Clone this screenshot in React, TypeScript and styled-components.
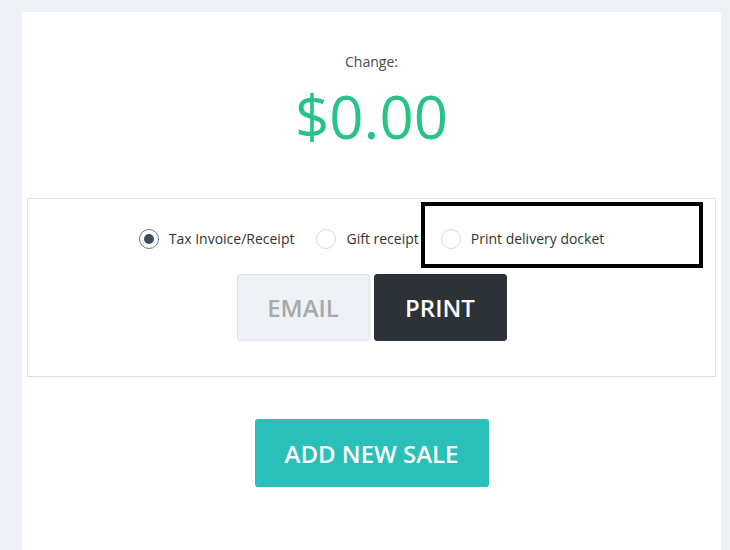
import React, { useState } from 'react';
import styled, { createGlobalStyle } from 'styled-components';

const Global = createGlobalStyle`
  html, body { margin: 0; padding: 0; background: #edf0f5; }
  body { font-family: "Open Sans", "Noto Sans", sans-serif; }
  * { box-sizing: border-box; }
`;

const Page = styled.div`
  height: 550px;
  overflow: hidden;
  padding: 12px 9px 0 22px;
`;

const Card = styled.div`
  background: #fff;
  border-radius: 3px;
  width: 699px;
  min-height: 560px;
  padding: 40px 5px 0 5px;
  display: flex;
  flex-direction: column;
  align-items: center;
`;

const ChangeLabel = styled.div`
  font-size: 14px;
  line-height: 19px;
  color: #4a4a4a;
`;

const Amount = styled.div`
  margin-top: 4px;
  font-size: 60px;
  line-height: 82px;
  color: #27c487;
`;

const OptionsBox = styled.div`
  margin-top: 41px;
  width: 100%;
  border: 1px solid #e3e3e3;
  border-bottom-color: #dcdcdc;
  padding: 30px 0 35px;
  display: flex;
  flex-direction: column;
  align-items: center;
  gap: 25px;
`;

const RadioRow = styled.div`
  display: flex;
  align-items: center;
  gap: 22px;
`;

const Option = styled.label`
  position: relative;
  display: flex;
  align-items: center;
  gap: 10px;
  font-size: 14px;
  line-height: 20px;
  color: #333;
  cursor: pointer;
`;

const Radio = styled.span<{ $checked: boolean }>`
  width: 20px;
  height: 20px;
  border-radius: 50%;
  border: 1px solid ${p => (p.$checked ? '#6b7890' : '#dcdad4')};
  display: flex;
  align-items: center;
  justify-content: center;
  background: #fff;
  &::after {
    content: '';
    width: 10px;
    height: 10px;
    border-radius: 50%;
    background: #3e4a66;
    display: ${p => (p.$checked ? 'block' : 'none')};
  }
`;

const Highlight = styled.span`
  position: absolute;
  left: -20px;
  right: -99px;
  top: -27px;
  bottom: -19px;
  border: 4px solid #000;
  pointer-events: none;
`;

const ButtonGroup = styled.div`
  display: flex;
  gap: 4px;
`;

const ActionButton = styled.button<{ $variant: 'light' | 'dark' }>`
  width: 133px;
  height: 67px;
  border-radius: 3px;
  font-family: "Open Sans", sans-serif;
  font-size: 24px;
  font-weight: 600;
  cursor: pointer;
  border: 1px solid ${p => (p.$variant === 'light' ? '#dfe2e7' : '#2d3138')};
  background: ${p => (p.$variant === 'light' ? '#eef1f6' : '#2d3138')};
  color: ${p => (p.$variant === 'light' ? '#a9a9a9' : '#fff')};
`;

const AddSaleButton = styled.button`
  margin-top: 42px;
  width: 234px;
  height: 68px;
  border: none;
  border-radius: 3px;
  background: #2bbfba;
  color: #fff;
  font-family: "Open Sans", sans-serif;
  font-size: 24px;
  font-weight: 600;
  cursor: pointer;
`;

const options = [
  { id: 'tax', label: 'Tax Invoice/Receipt' },
  { id: 'gift', label: 'Gift receipt' },
  { id: 'docket', label: 'Print delivery docket', highlighted: true },
];

export default function App() {
  const [selected, setSelected] = useState('tax');
  return (
    <>
      <Global />
      <Page>
        <Card>
          <ChangeLabel>Change:</ChangeLabel>
          <Amount>$0.00</Amount>
          <OptionsBox>
            <RadioRow>
              {options.map(o => (
                <Option key={o.id} onClick={() => setSelected(o.id)}>
                  <Radio $checked={selected === o.id} />
                  {o.label}
                  {o.highlighted && <Highlight />}
                </Option>
              ))}
            </RadioRow>
            <ButtonGroup>
              <ActionButton $variant="light">EMAIL</ActionButton>
              <ActionButton $variant="dark">PRINT</ActionButton>
            </ButtonGroup>
          </OptionsBox>
          <AddSaleButton>ADD NEW SALE</AddSaleButton>
        </Card>
      </Page>
    </>
  );
}
